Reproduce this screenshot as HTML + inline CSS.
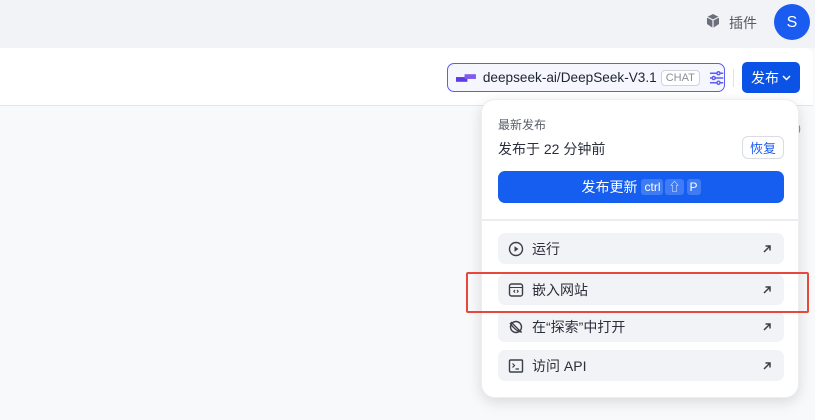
<!DOCTYPE html>
<html><head><meta charset="utf-8"><style>
*{box-sizing:border-box;margin:0;padding:0}
body{width:815px;height:420px;overflow:hidden;background:#f8f9fb;font-family:"Liberation Sans","Noto Sans CJK SC",sans-serif;position:relative;color:#1f2430}
.abs{position:absolute}
.top{left:0;top:0;width:815px;height:48px;background:#f2f3f7}
.bar{left:0;top:48px;width:813px;height:58px;background:#fff;border-bottom:1px solid #e3e5ea;border-top-right-radius:8px}
.pill{left:447px;top:63px;width:278px;height:29px;border:1px solid #5b5ef0;border-radius:7px;background:#f5f6fe;display:flex;align-items:center;padding-left:8px;font-size:14px;color:#1f2430;white-space:nowrap}
.chat{font-size:11px;color:#8a8f9c;border:1px solid #cfd3dc;border-radius:4px;padding:1px 4px;margin-left:4px;background:#fff}
.pub{left:742px;top:62px;width:58px;height:31px;background:#0b52e6;border-radius:5px;color:#fff;font-size:14px;display:flex;align-items:center;justify-content:center}
.dd{left:481px;top:99px;width:318px;height:299px;background:#fff;border-radius:14px;box-shadow:0 4px 14px rgba(0,0,0,.13);border:1px solid #eceef2}
.item{position:absolute;left:16px;width:286px;height:31px;background:#f2f3f6;border-radius:7px;display:flex;align-items:center;padding-left:10px;font-size:14px;color:#2a2f3a}
.item svg{margin-right:8px}
.item svg.ar{position:absolute;right:12px;top:11px;margin:0}
.kbd{display:inline-block;background:rgba(255,255,255,.18);border-radius:3px;padding:0 3px;font-size:12px;margin-left:2px;line-height:16px}
</style></head><body>
<div class="abs top"></div>
<svg class="abs" style="left:705px;top:13px" width="16" height="16" viewBox="0 0 16 16"><path d="M8 1L14 4V11L8 15L2 11V4Z" fill="#6b6f7a"/><path d="M2 4L8 7L14 4M8 7V15" stroke="#f2f3f7" stroke-width="1.2" fill="none"/></svg>
<div class="abs" style="left:729px;top:13px;font-size:14px;color:#555a66">插件</div>
<div class="abs" style="left:774px;top:4px;width:36px;height:36px;border-radius:50%;background:#1a5cf0;color:#fff;font-size:16px;display:flex;align-items:center;justify-content:center;padding-top:2px">S</div>
<div class="abs bar"></div>
<div class="abs pill">
<svg width="22" height="10" viewBox="0 0 22 10"><rect x="0" y="4" width="12" height="5" fill="#5b3be6"/><rect x="9" y="1" width="12" height="5" fill="#7d5cf0"/></svg>
<span style="margin-left:6px;font-size:13.6px">deepseek-ai/DeepSeek-V3.1</span><span class="chat">CHAT</span>
<svg style="margin-left:9px" width="16" height="14" viewBox="0 0 16 14" stroke="#5b5ef0" stroke-width="1.5" fill="none"><path d="M1 2H15M1 7H15M1 12H15"/><circle cx="10" cy="2" r="1.6" fill="#f5f6fe"/><circle cx="5" cy="7" r="1.6" fill="#f5f6fe"/><circle cx="10" cy="12" r="1.6" fill="#f5f6fe"/></svg>
</div>
<div class="abs" style="left:733px;top:69px;width:1px;height:18px;background:#e0e2e8"></div>
<div class="abs pub">发布<svg style="margin-left:3px" width="9" height="6" viewBox="0 0 9 6"><path d="M1 1L4.5 4.5L8 1" stroke="#fff" stroke-width="1.5" fill="none"/></svg></div>
<div class="abs" style="left:797px;top:121px;font-size:12px;color:#888">)</div>
<div class="abs dd">
<div class="abs" style="left:16px;top:16px;font-size:12px;color:#5a5f6b">最新发布</div>
<div class="abs" style="left:16px;top:39px;font-size:14px;color:#2a2f3a">发布于 22 分钟前</div>
<div class="abs" style="left:260px;top:36px;width:42px;height:23px;border:1px solid #d9dce2;border-radius:6px;font-size:13px;color:#1a5cf0;display:flex;align-items:center;justify-content:center">恢复</div>
<div class="abs" style="left:16px;top:71px;width:286px;height:32px;background:#155eef;border-radius:7px;color:#fff;font-size:14px;display:flex;align-items:center;justify-content:center">发布更新 <span class="kbd" style="margin-left:4px">ctrl</span><span class="kbd">⇧</span><span class="kbd" style="margin-left:3px">P</span></div>
<div class="abs" style="left:0;top:119px;width:316px;height:2px;background:#eaecf0"></div>
<div class="item" style="top:133px"><svg width="16" height="16" viewBox="0 0 16 16"><circle cx="8" cy="8" r="6.5" stroke="#3a3f4a" stroke-width="1.4" fill="none"/><path d="M6.5 5.3V10.7L10.5 8Z" fill="#3a3f4a"/></svg>运行<svg class="ar" width="10" height="10" viewBox="0 0 10 10"><path d="M2 8L8 2M3.5 2H8V6.5" stroke="#3a3f4a" stroke-width="1.5" fill="none"/></svg></div>
<div class="item" style="top:174px"><svg width="16" height="16" viewBox="0 0 16 16"><rect x="1.5" y="2" width="13" height="12" rx="2" stroke="#3a3f4a" stroke-width="1.4" fill="none"/><path d="M1.5 5.5H14.5M7 8L5.8 9.3L7 10.6M9 8L10.2 9.3L9 10.6" stroke="#3a3f4a" stroke-width="1.1" fill="none"/></svg>嵌入网站<svg class="ar" width="10" height="10" viewBox="0 0 10 10"><path d="M2 8L8 2M3.5 2H8V6.5" stroke="#3a3f4a" stroke-width="1.5" fill="none"/></svg></div>
<div class="item" style="top:211px"><svg width="16" height="16" viewBox="0 0 16 16"><circle cx="8" cy="8" r="5.5" stroke="#3a3f4a" stroke-width="1.4" fill="none"/><path d="M2 4C5 9 10 13 14 13M3 3L13 13" stroke="#3a3f4a" stroke-width="1.3" fill="none"/></svg>在“探索”中打开<svg class="ar" width="10" height="10" viewBox="0 0 10 10"><path d="M2 8L8 2M3.5 2H8V6.5" stroke="#3a3f4a" stroke-width="1.5" fill="none"/></svg></div>
<div class="item" style="top:250px"><svg width="16" height="16" viewBox="0 0 16 16"><rect x="1.5" y="2" width="13" height="12" rx="1" stroke="#3a3f4a" stroke-width="1.4" fill="none"/><path d="M4.5 5.5L6.5 7.5L4.5 9.5M7.5 11H11" stroke="#3a3f4a" stroke-width="1.2" fill="none"/></svg>访问 API<svg class="ar" width="10" height="10" viewBox="0 0 10 10"><path d="M2 8L8 2M3.5 2H8V6.5" stroke="#3a3f4a" stroke-width="1.5" fill="none"/></svg></div>
</div>
<div class="abs" style="left:466px;top:272px;width:343px;height:41px;border:2.5px solid #e8473b;border-radius:2px"></div>
</body></html>
